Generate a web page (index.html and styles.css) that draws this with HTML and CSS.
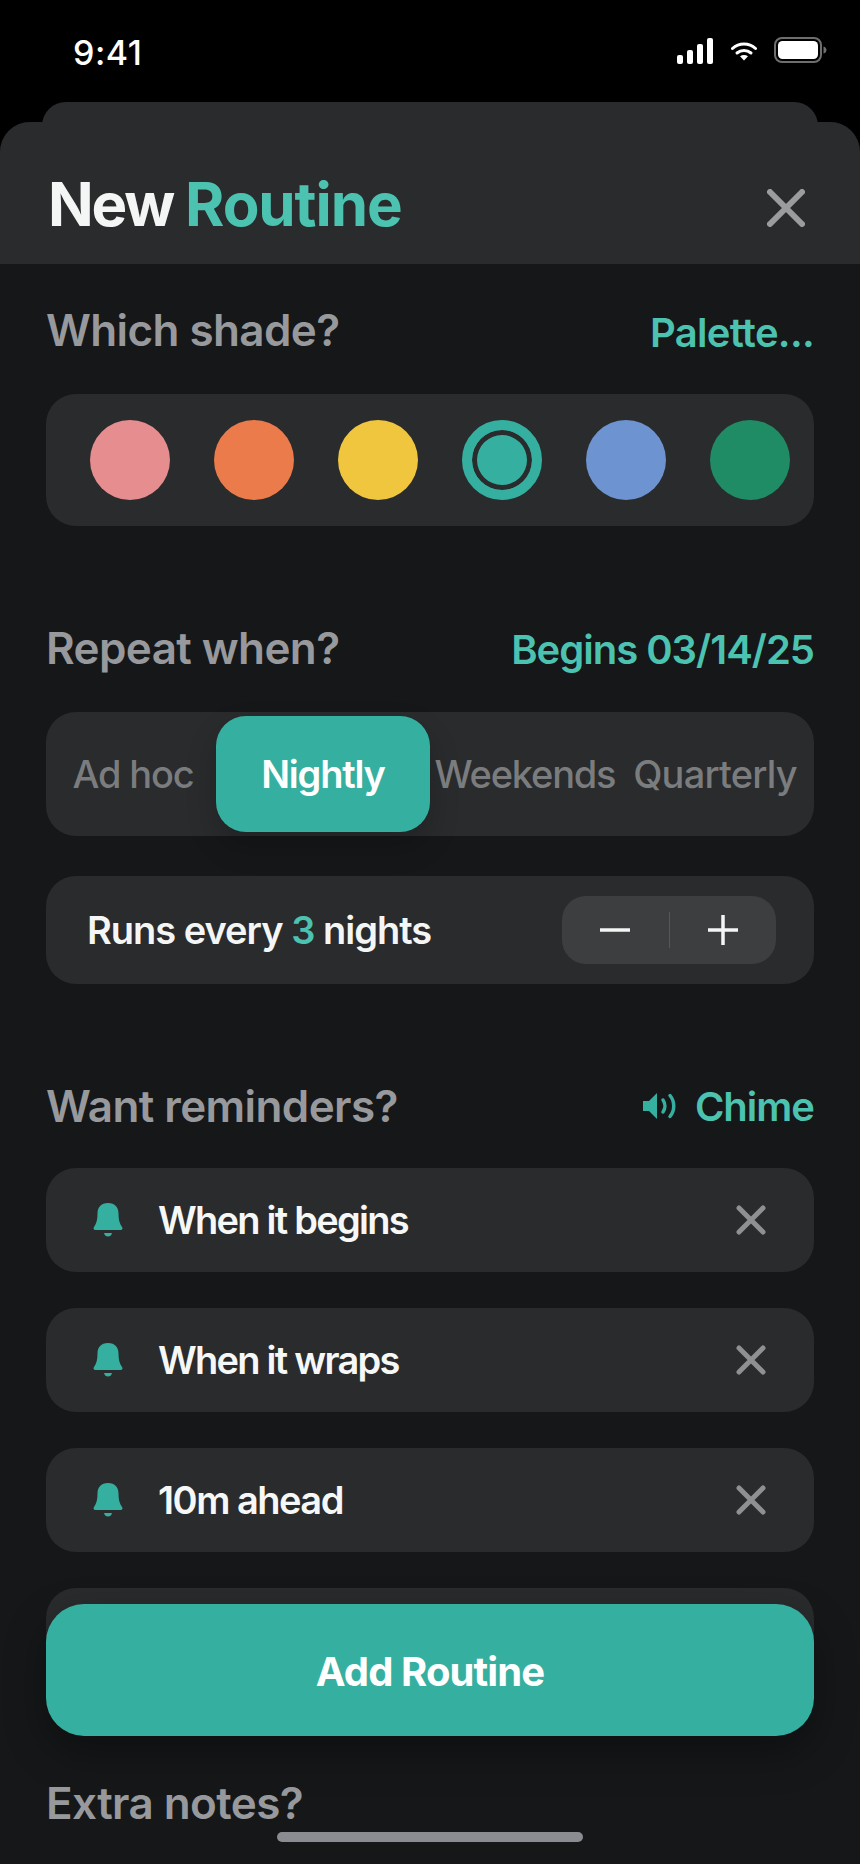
FILE: index.html
```html
<!DOCTYPE html>
<html lang="en">
<head>
<meta charset="utf-8">
<title>New Routine</title>
<link rel="stylesheet" href="styles.css">
</head>
<body>
<div class="phone">
  <div class="status">
    <span class="time">9:41</span>
    <div class="status-icons">
      <svg class="signal" width="36" height="26" viewBox="0 0 36 26"><rect x="0" y="17" width="6" height="9" rx="2"/><rect x="10" y="12" width="6" height="14" rx="2"/><rect x="20" y="6" width="6" height="20" rx="2"/><rect x="30" y="0" width="6" height="26" rx="2"/></svg>
      <svg class="wifi" width="26" height="20" viewBox="0 0 26 20"><path d="M1.5 7.5C8 1.5 18 1.5 24.500 7.500" fill="none" stroke="#fff" stroke-width="3" stroke-linecap="round"/><path d="M6 12C10 8.500 16 8.500 20 12" fill="none" stroke="#fff" stroke-width="3" stroke-linecap="round"/><path d="M9 15.200C11.500 13.500 14.500 13.500 17 15.200L13 19.500Z" fill="#fff"/></svg>
      <svg class="battery" width="53" height="26" viewBox="0 0 53 26"><rect x="1" y="1" width="46" height="24" rx="7" fill="none" stroke="#6e6e6e" stroke-width="2"/><rect x="4" y="4" width="40" height="18" rx="4.500" fill="#fff"/><path d="M49.500 9.500C51.500 10 52.500 11.500 52.500 13C52.500 14.500 51.500 16 49.500 16.500Z" fill="#6e6e6e"/></svg>
    </div>
  </div>
  <div class="back-card"></div>
  <div class="sheet">
    <header class="sheet-head">
      <h1 class="title">New <span class="title-accent">Routine</span></h1>
      <svg class="close" width="38" height="38" viewBox="0 0 38 38"><path d="M3 3L35 35M35 3L3 35"/></svg>
    </header>
    <main class="sheet-body">
      <section class="section shade">
        <div class="sec-head"><h2>Which shade?</h2><span class="link link-palette">Palette...</span></div>
        <div class="card swatches">
          <span class="swatch pink"></span>
          <span class="swatch orange"></span>
          <span class="swatch yellow"></span>
          <span class="swatch teal selected"></span>
          <span class="swatch blue"></span>
          <span class="swatch green"></span>
        </div>
      </section>
      <section class="section repeat">
        <div class="sec-head"><h2>Repeat when?</h2><span class="link">Begins 03/14/25</span></div>
        <div class="card segments">
          <span class="seg seg-adhoc">Ad hoc</span>
          <span class="seg seg-nightly active">Nightly</span>
          <span class="seg seg-weekends">Weekends</span>
          <span class="seg seg-quarterly">Quarterly</span>
        </div>
        <div class="card runs">
          <span class="runs-text">Runs every <span class="accent">3</span> nights</span>
          <div class="stepper">
            <svg width="30" height="30" viewBox="0 0 30 30"><path d="M0 15H30"/></svg>
            <span class="divider"></span>
            <svg width="30" height="30" viewBox="0 0 30 30"><path d="M0 15H30M15 0V30"/></svg>
          </div>
        </div>
      </section>
      <section class="section reminders">
        <div class="sec-head"><h2>Want reminders?</h2>
          <span class="link chime">
            <svg width="34" height="26" viewBox="0 0 34 26"><path d="M0 8H6L14 0V26L6 18H0Z" fill="#35b0a0"/><path d="M20 7C22.500 10.500 22.500 15.500 20 19M27 2.500C32 8.500 32 17.500 27 23.500" fill="none" stroke="#35b0a0" stroke-width="3.500" stroke-linecap="round"/></svg>
            Chime
          </span>
        </div>
        <div class="reminder-list">
          <div class="card reminder">
            <svg class="bell" width="30" height="34" viewBox="0 0 30 34"><path d="M15 0C22 0 25.500 4.500 25.500 10.500C25.500 16.500 26.500 20.500 29 24C30 25.500 29.500 27 27.500 27H2.500C.5 27 0 25.500 1 24C3.500 20.500 4.500 16.500 4.500 10.500C4.500 4.500 8 0 15 0Z"/><path d="M11 30H19C18.500 32.500 17 33.500 15 33.500C13 33.500 11.500 32.500 11 30Z"/></svg>
            <span class="rem-text">When it begins</span>
            <svg class="rem-x" width="30" height="30" viewBox="0 0 30 30"><path d="M3 3L27 27M27 3L3 27"/></svg>
          </div>
          <div class="card reminder">
            <svg class="bell" width="30" height="34" viewBox="0 0 30 34"><path d="M15 0C22 0 25.500 4.500 25.500 10.500C25.500 16.500 26.500 20.500 29 24C30 25.500 29.500 27 27.500 27H2.500C.5 27 0 25.500 1 24C3.500 20.500 4.500 16.500 4.500 10.500C4.500 4.500 8 0 15 0Z"/><path d="M11 30H19C18.500 32.500 17 33.500 15 33.500C13 33.500 11.500 32.500 11 30Z"/></svg>
            <span class="rem-text">When it wraps</span>
            <svg class="rem-x" width="30" height="30" viewBox="0 0 30 30"><path d="M3 3L27 27M27 3L3 27"/></svg>
          </div>
          <div class="card reminder">
            <svg class="bell" width="30" height="34" viewBox="0 0 30 34"><path d="M15 0C22 0 25.500 4.500 25.500 10.500C25.500 16.500 26.500 20.500 29 24C30 25.500 29.500 27 27.500 27H2.500C.5 27 0 25.500 1 24C3.500 20.500 4.500 16.500 4.500 10.500C4.500 4.500 8 0 15 0Z"/><path d="M11 30H19C18.500 32.500 17 33.500 15 33.500C13 33.500 11.500 32.500 11 30Z"/></svg>
            <span class="rem-text rem-short">10m ahead</span>
            <svg class="rem-x" width="30" height="30" viewBox="0 0 30 30"><path d="M3 3L27 27M27 3L3 27"/></svg>
          </div>
          <div class="card reminder"></div>
        </div>
      </section>
      <section class="section notes">
        <div class="sec-head"><h2>Extra notes?</h2></div>
      </section>
    </main>
    <button class="cta">Add Routine</button>
    <div class="home"></div>
  </div>
</div>
</body>
</html>
```

FILE: styles.css
```css
* { box-sizing: border-box; }
html, body { margin: 0; padding: 0; background: #000; }
body { font-family: Inter, "Noto Sans", sans-serif; }
h1, h2 { margin: 0; }

.phone { position: relative; width: 860px; height: 1864px; overflow: hidden; background: #000; }

.status { height: 102px; padding: 36px 33px 0 73px; display: flex; justify-content: space-between; align-items: flex-start; }
.time { color: #fff; font-size: 34px; line-height: 34px; font-weight: 550; letter-spacing: .5px; }
.status-icons { display: flex; align-items: flex-start; }
.signal { fill: #fff; margin-top: 2px; }
.wifi { margin: 5px 0 0 18px; }
.battery { margin: 1px 0 0 17px; }

.back-card { height: 40px; margin: 0 42px -20px; background: #292b2d; border-radius: 24px 24px 0 0; }

.sheet { position: relative; height: 1742px; background: #151719; border-radius: 30px 30px 0 0; overflow: hidden; }
.sheet-head { height: 142px; background: #292b2d; display: flex; justify-content: space-between; align-items: flex-start; padding: 0 55px 0 48px; }
.title { margin-top: 49px; font-size: 60px; line-height: 66px; font-weight: 700; color: #f4f5f5; letter-spacing: -2.2px; }
.title-accent { color: #4cc2b0; letter-spacing: -1.1px; }
.accent { color: #4cc2b0; }
.close { margin-top: 67px; fill: none; stroke: #9a9c9e; stroke-width: 6; stroke-linecap: round; }

.sheet-body { padding: 0 46px; }
.section { display: flex; flex-direction: column; }
.shade { padding-top: 40px; }
.repeat { padding-top: 96px; }
.reminders { padding-top: 96px; }
.notes { padding-top: 85px; }

.sec-head { display: flex; justify-content: space-between; align-items: center; height: 52px; }
.sec-head h2 { font-size: 44px; line-height: 52px; font-weight: 600; color: #97999c; letter-spacing: -.6px; }
.link { font-size: 40px; font-weight: 600; color: #4cc2b0; letter-spacing: -1px; padding-top: 2px; }
.link-palette { letter-spacing: -.7px; padding-top: 4px; }

.card { background: #292b2d; border-radius: 30px; }

.swatches { margin-top: 38px; height: 132px; display: flex; align-items: center; justify-content: space-between; padding: 0 24px 0 44px; }
.swatch { width: 80px; height: 80px; border-radius: 50%; }
.pink { background: #e68d90; }
.orange { background: #ec7b4b; }
.yellow { background: #f0c63f; }
.teal { background: #35b0a0; }
.blue { background: #6d94d0; }
.green { background: #1f8c65; }
.selected { border: 10px solid #35b0a0; box-shadow: inset 0 0 0 5px #292b2d; }

.segments { margin-top: 38px; height: 124px; display: flex; align-items: center; padding: 4px; position: relative; }
.seg { font-size: 38px; font-weight: 500; color: #7a7c7e; letter-spacing: -1.2px; text-align: center; }
.seg-adhoc { width: 166px; }
.seg-nightly { width: 214px; }
.seg-weekends { width: 190px; }
.seg-quarterly { width: 190px; letter-spacing: -.8px; }
.active { height: 116px; line-height: 116px; background: #35b0a0; color: #fff; border-radius: 30px; box-shadow: 0 14px 30px rgba(0,0,0,.2); font-weight: 600; }

.runs { margin-top: 40px; height: 108px; display: flex; justify-content: space-between; align-items: center; padding: 0 38px 0 41px; }
.runs-text { font-size: 38px; font-weight: 600; color: #f4f5f5; letter-spacing: -1px; }
.stepper { width: 214px; height: 68px; background: #3c3e40; border-radius: 24px; display: flex; align-items: center; justify-content: space-between; padding: 0 38px; }
.stepper svg { fill: none; stroke: #f4f5f5; stroke-width: 3.500; stroke-linecap: round; }
.divider { width: 1px; height: 36px; background: #55575a; }

.chime { display: flex; align-items: center; gap: 18px; padding-top: 0; }
.reminder-list { margin-top: 36px; display: flex; flex-direction: column; gap: 36px; }
.reminder { height: 104px; display: flex; align-items: center; padding: 0 48px 0 47px; }
.bell { fill: #35b0a0; }
.rem-text { margin-left: 35px; flex: 1; font-size: 38px; font-weight: 600; color: #f6f7f7; letter-spacing: -1.75px; }
.rem-short { letter-spacing: -1.5px; }
.rem-x { fill: none; stroke: #8e9092; stroke-width: 5; stroke-linecap: round; }

.cta { position: absolute; left: 46px; top: 1482px; width: 768px; height: 132px; padding: 2px 0 0; border: 0; border-radius: 38px; background: #35b0a0; color: #fff; font-family: inherit; font-size: 40px; font-weight: 700; letter-spacing: -.9px; box-shadow: 0 16px 40px rgba(0,0,0,.35); }
.home { position: absolute; left: 277px; top: 1710px; width: 306px; height: 10px; border-radius: 5px; background: #8b8c92; }
```
